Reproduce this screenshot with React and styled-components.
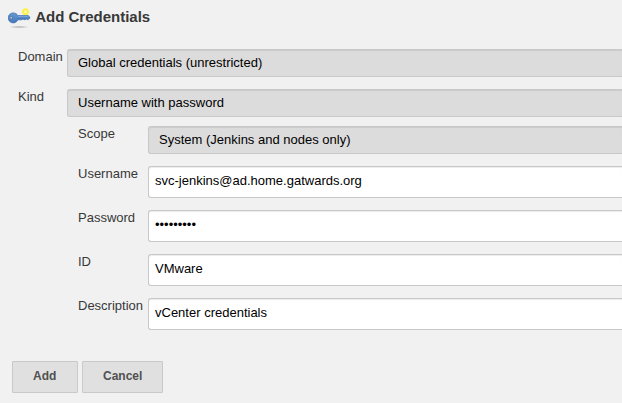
import React from "react";
import styled, { createGlobalStyle, css } from "styled-components";

const GlobalStyle = createGlobalStyle`
  * { box-sizing: border-box; }
  body {
    margin: 0;
    background: #f1f1f1;
    color: #383838;
    font: 13px/15px "Liberation Sans", Arial, sans-serif;
    overflow: hidden;
  }
`;

const Page = styled.main`
  height: 403px;
  overflow: hidden;
`;

const Header = styled.header`
  display: flex;
  align-items: flex-start;
  gap: 3.2px;
  height: 49px;
  padding: 6px 0 0 8px;
`;

const Title = styled.h1`
  margin: 2px 0 0;
  font-size: 15px;
  line-height: 17px;
  font-weight: bold;
  color: #383838;
`;

const Form = styled.form`
  display: flex;
  flex-direction: column;
`;

const Row = styled.div`
  display: grid;
  grid-template-columns: ${(p) => (p.$nested ? "70px 1fr" : "49px 1fr")};
  padding-left: ${(p) => (p.$nested ? "78px" : "18px")};
  margin-bottom: ${(p) => p.$gap ?? 12}px;
`;

const Label = styled.label`
  height: 15px;
  white-space: nowrap;
`;

const control = css`
  display: block;
  width: 100%;
  border: 1px solid #c8c8c8;
  border-right: 0;
  border-radius: 3px 0 0 3px;
  color: #000;
  font: inherit;
  outline: none;
`;

const Select = styled.button.attrs({ type: "button" })`
  ${control}
  height: 28px;
  padding: 0 10px 2px;
  background: #dcdcdc;
  box-shadow: inset 0 1px 1px rgba(0, 0, 0, 0.075);
  text-align: left;
`;

const Input = styled.input`
  ${control}
  height: 32px;
  padding: 0 6px 3px;
  background: #fff;
  box-shadow: inset 0 1px 1px rgba(0, 0, 0, 0.075);
`;

const Actions = styled.div`
  display: flex;
  gap: 4px;
  padding: 19px 0 0 12px;
`;

const Button = styled.button.attrs({ type: "button" })`
  width: ${(p) => p.$width}px;
  height: 32px;
  padding: 0 0 2px 20px;
  border: 1px solid #c9c9c9;
  border-radius: 1px;
  background: #e0e0e0;
  color: #505050;
  font: bold 12px/14px "Liberation Sans", Arial, sans-serif;
  text-align: left;
`;

const Icon = styled.svg`
  display: block;
  flex: none;
`;

function KeyIcon() {
  return (
    <Icon width="24" height="24" viewBox="0 0 24 24" aria-hidden="true">
      <defs>
        <radialGradient id="keyShadow">
          <stop offset="0" stopColor="#888" stopOpacity=".7" />
          <stop offset="1" stopColor="#888" stopOpacity="0" />
        </radialGradient>
        <radialGradient id="sparkle">
          <stop offset="0" stopColor="#fffbd0" />
          <stop offset=".28" stopColor="#fcf6a0" />
          <stop offset=".5" stopColor="#faee3c" />
          <stop offset=".8" stopColor="#fbf26a" />
          <stop offset="1" stopColor="#fbf5a0" stopOpacity=".5" />
        </radialGradient>
        <linearGradient id="keyBlue" x1="0" y1="0" x2="0" y2="1">
          <stop offset="0" stopColor="#6698d2" />
          <stop offset="1" stopColor="#4678ba" />
        </linearGradient>
      </defs>
      <ellipse cx="11" cy="21" rx="11" ry="1.2" fill="url(#keyShadow)" />
      <circle cx="17.5" cy="5.8" r="4" fill="url(#sparkle)" />
      <path
        d="M5.2 6.9C7.4 6.9 9 8 9.8 9.6H20.2L21.8 11V12.2L20.4 13.6H19.2L18.2 12.9L17.2 13.7H16L15 12.9L14 13.8H9.9C9 15.7 7.4 16.9 5.2 16.9A5 5 0 0 1 5.2 6.9Z"
        fill="url(#keyBlue)"
        stroke="#3c6dac"
        strokeWidth=".7"
      />
      <path d="M9.6 10.7H20.2" stroke="#84aee0" strokeWidth=".8" />
      <path d="M9.4 12.2H20" stroke="#3b6cab" strokeWidth=".5" />
      <ellipse cx="3.1" cy="11.8" rx="1" ry="1.5" fill="#eef3f8" stroke="#3a5f90" strokeWidth=".7" />
    </Icon>
  );
}

const fields = [
  { id: "username", label: "Username", value: "svc-jenkins@ad.home.gatwards.org" },
  { id: "password", label: "Password", value: "•••••••••" },
  { id: "identifier", label: "ID", value: "VMware" },
  { id: "description", label: "Description", value: "vCenter credentials" },
];

export default function App() {
  return (
    <Page>
      <GlobalStyle />
      <Header>
        <KeyIcon />
        <Title>Add Credentials</Title>
      </Header>
      <Form>
        <Row>
          <Label htmlFor="domain">Domain</Label>
          <Select id="domain">Global credentials (unrestricted)</Select>
        </Row>
        <Row $gap={9}>
          <Label htmlFor="kind">Kind</Label>
          <Select id="kind">Username with password</Select>
        </Row>
        <Row $nested>
          <Label htmlFor="scope">Scope</Label>
          <Select id="scope">System (Jenkins and nodes only)</Select>
        </Row>
        {fields.map((f) => (
          <Row $nested key={f.id}>
            <Label htmlFor={f.id}>{f.label}</Label>
            <Input id={f.id} defaultValue={f.value} />
          </Row>
        ))}
        <Actions>
          <Button $width={66}>Add</Button>
          <Button $width={81}>Cancel</Button>
        </Actions>
      </Form>
    </Page>
  );
}
